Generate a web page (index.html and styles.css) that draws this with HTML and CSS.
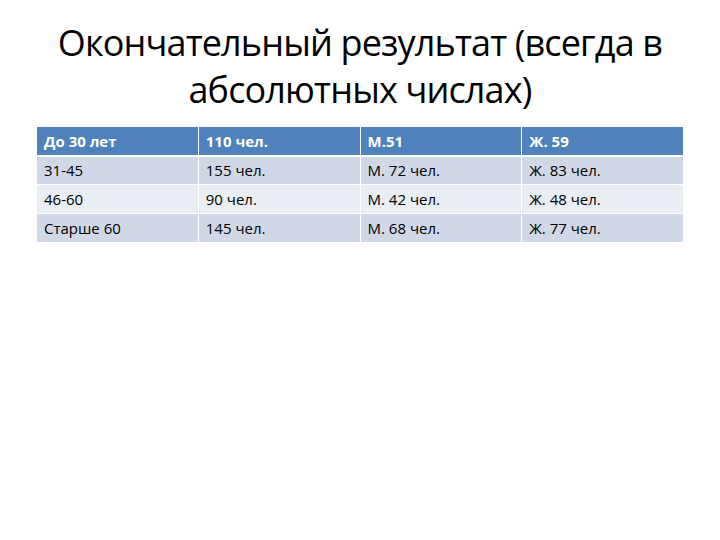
FILE: index.html
```html
<!DOCTYPE html>
<html lang="ru">
<head>
<meta charset="utf-8">
<link rel="stylesheet" href="styles.css">
</head>
<body>
<div class="slide">
  <h1 class="title">Окончательный результат (всегда в абсолютных числах)</h1>
  <table class="data">
    <tr class="head"><td>До 30 лет</td><td>110 чел.</td><td>М.51</td><td>Ж. 59</td></tr>
    <tr class="odd"><td>31-45</td><td>155 чел.</td><td>М. 72 чел.</td><td>Ж. 83 чел.</td></tr>
    <tr class="even"><td>46-60</td><td>90 чел.</td><td>М. 42 чел.</td><td>Ж. 48 чел.</td></tr>
    <tr class="odd"><td>Старше 60</td><td>145 чел.</td><td>М. 68 чел.</td><td>Ж. 77 чел.</td></tr>
  </table>
</div>
</body>
</html>
```
FILE: styles.css
```css
html, body { margin: 0; padding: 0; background: #fff; }
.slide {
  width: 720px; height: 540px;
  font-family: "Open Sans", "Noto Sans", sans-serif;
  color: #000;
  padding-top: 19px;
  box-sizing: border-box;
}
.title {
  margin: 0 auto;
  width: 620px;
  text-align: center;
  font-weight: normal;
  font-size: 36px;
  line-height: 47px;
  letter-spacing: -0.85px;
}
.data {
  margin: 13px 0 0 36px;
  width: 648px;
  border-collapse: collapse;
  table-layout: fixed;
  font-size: 15px;
}
.data td {
  border: 1px solid #fff;
  padding: 0 7px;
  height: 29px;
  box-sizing: border-box;
}
.data tr.head td { background: #4f81bd; color: #fff; font-weight: bold; border-bottom: 2px solid #fff; }
.data tr.odd td { background: #d0d8e8; }
.data tr.even td { background: #e9edf4; }
```
